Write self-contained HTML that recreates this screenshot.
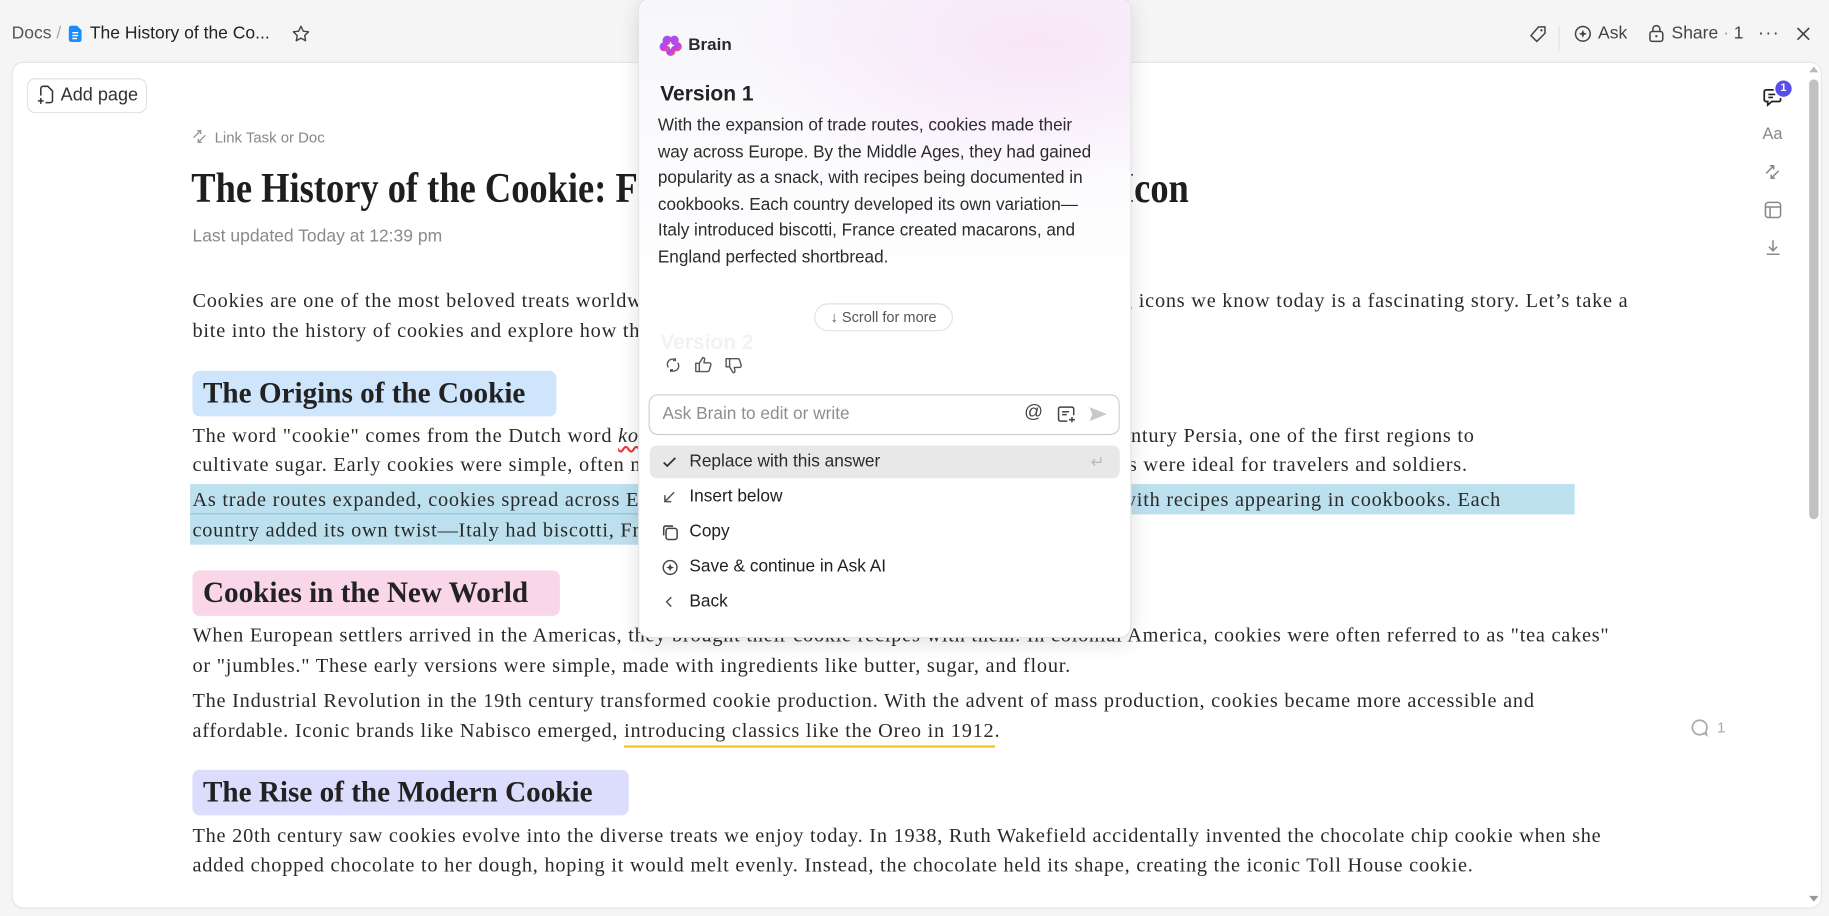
<!DOCTYPE html>
<html><head><meta charset="utf-8"><style>
html,body{margin:0;padding:0;width:1829px;height:916px;overflow:hidden;background:#f5f5f5}
#w{position:absolute;left:0;top:0;width:1568px;height:785px;transform:scale(1.16645);transform-origin:0 0;font-family:"Liberation Sans",sans-serif;color:#202020}
.a{position:absolute;white-space:nowrap}
.card{position:absolute;left:10px;top:53px;width:1550px;height:724px;background:#fff;border:1px solid #e6e6e6;border-radius:10px}
.s{font-family:"Liberation Serif",serif;font-size:17.4px;line-height:26px;color:#2a2a2a;letter-spacing:0.66px}
.h2{position:absolute;left:165px;height:39px;border-radius:6px;font-family:"Liberation Serif",serif;font-weight:bold;font-size:25px;line-height:39px;padding:0 9px;color:#222;box-sizing:border-box;white-space:nowrap;overflow:hidden}
.ic{position:absolute}
.pop{position:absolute;left:547px;top:-2px;width:421px;height:547px;background:#fff;border:1px solid #e3e3e3;border-radius:10px;box-shadow:0 4px 18px rgba(0,0,0,.12);overflow:hidden}
.p{font-size:14.7px;line-height:22.5px;color:#2b2b2b}
.mi{position:absolute;left:9px;width:403px;height:28px;border-radius:6px;font-size:14.8px;line-height:28px}
.mi span{position:absolute;left:34px}
.mi svg{position:absolute;left:10px;top:7px}
</style></head><body><div id="w">
<div class="a" style="left:10px;top:19px;font-size:15px;line-height:20px;color:#555">Docs <span style="color:#aaa">/</span></div>
<svg class="ic" style="left:58px;top:22px" width="12" height="14" viewBox="0 0 12 14"><path d="M1 2a2 2 0 0 1 2-2h5l4 4v8a2 2 0 0 1-2 2H3a2 2 0 0 1-2-2z" fill="#1a8cff"/><path d="M4 6h5M4 8.5h5M4 11h4" stroke="#fff" stroke-width="1.2"/></svg>
<div class="a" style="left:77px;top:19px;font-size:15px;line-height:20px;color:#222">The History of the Co...</div>
<svg class="ic" style="left:250px;top:21px" width="16" height="16" viewBox="0 0 16 16"><path d="M8 1.5l2 4.2 4.5.6-3.3 3.1.8 4.5L8 11.7l-4 2.2.8-4.5L1.5 6.3 6 5.7z" fill="none" stroke="#444" stroke-width="1.2" stroke-linejoin="round"/></svg>
<svg class="ic" style="left:1310px;top:21px" width="17" height="17" viewBox="0 0 17 17"><path d="M9 2h5.5v5.5L7.5 14.5 2.5 9.5z" fill="none" stroke="#444" stroke-width="1.3" stroke-linejoin="round"/><circle cx="11.5" cy="5" r="1" fill="#444"/></svg>
<div class="a" style="left:1336px;top:22px;width:1px;height:22px;background:#e0e0e0"></div>
<svg class="ic" style="left:1349px;top:21px" width="16" height="16" viewBox="0 0 16 16"><circle cx="8" cy="8" r="6.3" fill="none" stroke="#444" stroke-width="1.3"/><path d="M8 4.5l1 2.5 2.5 1-2.5 1-1 2.5-1-2.5-2.5-1 2.5-1z" fill="#444"/></svg>
<div class="a" style="left:1370px;top:19px;font-size:15px;line-height:20px;color:#444">Ask</div>
<svg class="ic" style="left:1413px;top:20px" width="14" height="17" viewBox="0 0 14 17"><rect x="1.5" y="7" width="11" height="8.5" rx="2" fill="none" stroke="#444" stroke-width="1.3"/><path d="M4 7V5a3 3 0 0 1 6 0v2" fill="none" stroke="#444" stroke-width="1.3"/><circle cx="7" cy="11" r="1" fill="#444"/></svg>
<div class="a" style="left:1433px;top:19px;font-size:15px;line-height:20px;color:#444">Share <span style="color:#999">·</span> 1</div>
<div class="a" style="left:1507px;top:19px;font-size:16px;line-height:20px;color:#444;letter-spacing:1px">···</div>
<svg class="ic" style="left:1540px;top:23px" width="12" height="12" viewBox="0 0 12 12"><path d="M1 1l10 10M11 1L1 11" stroke="#444" stroke-width="1.4"/></svg>

<div class="card"></div>
<div class="a" style="left:23px;top:67px;width:103px;height:30px;border:1px solid #e3e3e3;border-radius:7px;box-sizing:border-box"></div>
<svg class="ic" style="left:31px;top:73px" width="16" height="17" viewBox="0 0 16 17"><path d="M4 9V3a2 2 0 0 1 2-2h4l4 4v8a2 2 0 0 1-2 2H8" fill="none" stroke="#333" stroke-width="1.3"/><path d="M4 11v5M1.5 13.5h5" stroke="#333" stroke-width="1.3"/></svg>
<div class="a" style="left:52px;top:72px;font-size:15.5px;line-height:20px;color:#333">Add page</div>
<svg class="ic" style="left:164px;top:110px" width="14" height="14" viewBox="0 0 14 14"><path d="M2 8l6-6M5 2h3v3M12 6l-6 6M9 12H6V9" fill="none" stroke="#999" stroke-width="1.2"/></svg>
<div class="a" style="left:184px;top:109px;font-size:12.8px;line-height:18px;color:#888">Link Task or Doc</div>
<div class="a" style="left:164px;top:139px;font-family:'Liberation Serif',serif;font-weight:bold;font-size:36px;line-height:44px;color:#1e1e1e;transform:scaleX(0.868);transform-origin:0 0">The History of the Cookie: From Ancient Treats to Modern Icon</div>
<div class="a" style="left:165px;top:193px;font-size:15px;line-height:20px;color:#8a8a8a">Last updated Today at 12:39 pm</div>

<div class="a s" style="left:165px;top:244px">Cookies are one of the most beloved treats worldwide, and their journey from early kitchens to the baking icons we know today is a fascinating story. Let’s take a</div>
<div class="a s" style="left:165px;top:270px">bite into the history of cookies and explore how they became a treat for everyone.</div>

<div class="h2" style="top:318px;width:312px;background:#cfe5fb">The Origins of the Cookie</div>
<div class="a s" style="left:165px;top:360px">The word "cookie" comes from the Dutch word <i style="text-decoration:underline wavy #e33;text-underline-offset:3px">koekje</i>, meaning "little cake." Cookies date back to 7th-century Persia, one of the first regions to</div>
<div class="a s" style="left:165px;top:385px">cultivate sugar. Early cookies were simple, often made from flour, honey, and spices. These portable treats were ideal for travelers and soldiers.</div>
<div class="a" style="left:163px;top:415px;width:1187px;height:26px;background:#bde0ef"></div>
<div class="a" style="left:163px;top:441px;width:430px;height:26px;background:#bde0ef"></div>
<div class="a" style="left:163px;top:440px;width:430px;height:1px;background:#8cc6df"></div>
<div class="a s" style="left:165px;top:415px">As trade routes expanded, cookies spread across Europe. By the Middle Ages, they had become a snack, with recipes appearing in cookbooks. Each</div>
<div class="a s" style="left:165px;top:441px">country added its own twist—Italy had biscotti, France had macarons.</div>

<div class="h2" style="top:489px;width:315px;background:#f9d7e8">Cookies in the New World</div>
<div class="a s" style="left:165px;top:531px">When European settlers arrived in the Americas, they brought their cookie recipes with them. In colonial America, cookies were often referred to as "tea cakes"</div>
<div class="a s" style="left:165px;top:557px">or "jumbles." These early versions were simple, made with ingredients like butter, sugar, and flour.</div>
<div class="a s" style="left:165px;top:587px">The Industrial Revolution in the 19th century transformed cookie production. With the advent of mass production, cookies became more accessible and</div>
<div class="a s" style="left:165px;top:613px">affordable. Iconic brands like Nabisco emerged, <span style="border-bottom:2px solid #f5c518;padding-bottom:3px">introducing classics like the Oreo in 1912</span>.</div>
<svg class="ic" style="left:1449px;top:616px" width="16" height="16" viewBox="0 0 16 16"><path d="M8 1.5a6.2 6.2 0 1 0 4 11l2 1.5-.6-3A6.2 6.2 0 0 0 8 1.5z" fill="none" stroke="#aaa" stroke-width="1.5"/></svg>
<div class="a" style="left:1472px;top:616px;font-size:13px;color:#aaa">1</div>

<div class="h2" style="top:660px;width:374px;background:#dcdcfd">The Rise of the Modern Cookie</div>
<div class="a s" style="left:165px;top:703px">The 20th century saw cookies evolve into the diverse treats we enjoy today. In 1938, Ruth Wakefield accidentally invented the chocolate chip cookie when she</div>
<div class="a s" style="left:165px;top:728px">added chopped chocolate to her dough, hoping it would melt evenly. Instead, the chocolate held its shape, creating the iconic Toll House cookie.</div>

<svg class="ic" style="left:1511px;top:75px" width="17" height="17" viewBox="0 0 17 17"><path d="M3 2h11a1.5 1.5 0 0 1 1.5 1.5v7A1.5 1.5 0 0 1 14 12H8l-3.5 3v-3H3a1.5 1.5 0 0 1-1.5-1.5v-7A1.5 1.5 0 0 1 3 2z" fill="none" stroke="#222" stroke-width="1.5"/><path d="M5 6h6M5 8.5h4" stroke="#222" stroke-width="1.4"/></svg>
<div class="a" style="left:1522px;top:69px;width:14px;height:14px;border-radius:7px;background:#5a4ee8;color:#fff;font-size:9.5px;line-height:14px;text-align:center;font-weight:bold;box-shadow:0 0 0 1.5px #fff">1</div>
<div class="a" style="left:1511px;top:106px;font-size:14px;color:#888">Aa</div>
<svg class="ic" style="left:1512px;top:140px" width="15" height="15" viewBox="0 0 14 14"><path d="M2 8l6-6M5 2h3v3M12 6l-6 6M9 12H6V9" fill="none" stroke="#888" stroke-width="1.2"/></svg>
<svg class="ic" style="left:1512px;top:172px" width="16" height="16" viewBox="0 0 16 16"><rect x="1.5" y="1.5" width="13" height="13" rx="2.5" fill="none" stroke="#888" stroke-width="1.3"/><path d="M1.5 5.5h13M5.5 5.5v9" stroke="#888" stroke-width="1.3"/></svg>
<svg class="ic" style="left:1512px;top:204px" width="16" height="16" viewBox="0 0 16 16"><path d="M8 2v9M4.5 7.5L8 11l3.5-3.5M2.5 14h11" fill="none" stroke="#888" stroke-width="1.3"/></svg>
<div class="a" style="left:1551px;top:68px;width:8px;height:377px;border-radius:4px;background:#c1c1c1"></div>
<div class="a" style="left:1551px;top:57px;width:0;height:0;border-left:4px solid transparent;border-right:4px solid transparent;border-bottom:5px solid #bbb"></div>
<div class="a" style="left:1551px;top:768px;width:0;height:0;border-left:4px solid transparent;border-right:4px solid transparent;border-top:5px solid #999"></div>

<div class="pop">
<div class="a" style="left:0;top:0;width:421px;height:260px;background:radial-gradient(ellipse 260px 120px at 340px 40px,rgba(248,226,248,.85),rgba(255,255,255,0)),linear-gradient(180deg,#f7f6fb 0%,#fff 100%)"></div>
<svg class="ic" style="left:17px;top:30px" width="20" height="20" viewBox="0 0 20 20"><defs><linearGradient id="g" x1="0" y1="0" x2="1" y2="1"><stop offset="0" stop-color="#6a7cff"/><stop offset=".5" stop-color="#c03cf0"/><stop offset="1" stop-color="#ff6a2a"/></linearGradient></defs><circle cx="7" cy="5.5" r="4" fill="url(#g)"/><circle cx="13" cy="5.5" r="4" fill="url(#g)"/><circle cx="15.5" cy="11" r="4" fill="url(#g)"/><circle cx="10" cy="15" r="4" fill="url(#g)"/><circle cx="4.5" cy="11" r="4" fill="url(#g)"/><path d="M10 6.5l1 2.5 2.5 1-2.5 1-1 2.5-1-2.5-2.5-1 2.5-1z" fill="#fff"/></svg>
<div class="a" style="left:42px;top:30px;font-size:14.6px;font-weight:bold;color:#2a2a2a;line-height:20px">Brain</div>
<div class="a" style="left:18px;top:69px;font-size:18px;font-weight:bold;color:#222;line-height:24px">Version 1</div>
<div class="a p" style="left:16px;top:98px">With the expansion of trade routes, cookies made their<br>way across Europe. By the Middle Ages, they had gained<br>popularity as a snack, with recipes being documented in<br>cookbooks. Each country developed its own variation—<br>Italy introduced biscotti, France created macarons, and<br>England perfected shortbread.</div>
<div class="a" style="left:18px;top:282px;font-size:18px;font-weight:bold;color:#f2f2f2;line-height:24px">Version 2</div>
<div class="a" style="left:150px;top:261px;width:119px;height:24px;border:1px solid #e2e2e2;border-radius:12px;background:#fff;box-sizing:border-box;font-size:12.5px;line-height:22px;color:#555;text-align:center">↓ Scroll for more</div>
<svg class="ic" style="left:22px;top:307px" width="14" height="14" viewBox="0 0 14 14"><path d="M3 9a4.5 4.5 0 0 1 6-6.5M11 5a4.5 4.5 0 0 1-6 6.5M9 1v2h-2M5 13v-2h2" fill="none" stroke="#555" stroke-width="1.2"/></svg>
<svg class="ic" style="left:47px;top:306px" width="16" height="15" viewBox="0 0 16 15"><path d="M1.5 6.5h3v7h-3zM4.5 6.5L7.5 1.5c1.2 0 1.8.8 1.5 2L8.5 6h4.5a1.5 1.5 0 0 1 1.4 1.9l-1.4 4.5a1.5 1.5 0 0 1-1.4 1.1H4.5" fill="none" stroke="#555" stroke-width="1.2" stroke-linejoin="round"/></svg>
<svg class="ic" style="left:73px;top:307px" width="16" height="15" viewBox="0 0 16 15"><g transform="matrix(1 0 0 -1 0 15)"><path d="M1.5 6.5h3v7h-3zM4.5 6.5L7.5 1.5c1.2 0 1.8.8 1.5 2L8.5 6h4.5a1.5 1.5 0 0 1 1.4 1.9l-1.4 4.5a1.5 1.5 0 0 1-1.4 1.1H4.5" fill="none" stroke="#555" stroke-width="1.2" stroke-linejoin="round"/></g></svg>
<div class="a" style="left:8px;top:339px;width:404px;height:35px;border:1px solid #cfcfcf;border-radius:8px;box-sizing:border-box"></div>
<div class="a" style="left:20px;top:346px;font-size:14.8px;line-height:20px;color:#8e8e8e">Ask Brain to edit or write</div>
<div class="a" style="left:330px;top:343px;font-size:16px;color:#444;line-height:24px">@</div>
<svg class="ic" style="left:358px;top:348px" width="16" height="16" viewBox="0 0 16 16"><path d="M9 14H3a1.5 1.5 0 0 1-1.5-1.5v-9A1.5 1.5 0 0 1 3 2h10a1.5 1.5 0 0 1 1.5 1.5V9" fill="none" stroke="#444" stroke-width="1.3"/><path d="M4.5 6h6M4.5 8.5h4M13 10.5v4.5M10.5 12.8h5" stroke="#444" stroke-width="1.3"/></svg>
<svg class="ic" style="left:385px;top:349px" width="17" height="14" viewBox="0 0 17 14"><path d="M1 1l15 6-15 6 2.5-6z" fill="#c8c8c8"/></svg>
<div class="mi" style="top:383px;background:#e8e8e8"><svg width="14" height="14" viewBox="0 0 14 14"><path d="M2 7.5l3 3 7-7" fill="none" stroke="#333" stroke-width="1.5"/></svg><span style="color:#2b2b2b">Replace with this answer</span><div class="a" style="left:378px;top:0;color:#bbb;font-size:14px">↵</div></div>
<div class="mi" style="top:413px"><svg width="14" height="14" viewBox="0 0 14 14"><path d="M11 3L3 11M3 5.5V11h5.5" fill="none" stroke="#555" stroke-width="1.3"/></svg><span>Insert below</span></div>
<div class="mi" style="top:443px"><svg width="15" height="15" viewBox="0 0 15 15"><rect x="4" y="4" width="9.5" height="9.5" rx="2" fill="none" stroke="#444" stroke-width="1.3"/><path d="M2 10V3.5A1.5 1.5 0 0 1 3.5 2H10" fill="none" stroke="#444" stroke-width="1.3"/></svg><span>Copy</span></div>
<div class="mi" style="top:473px"><svg width="15" height="15" viewBox="0 0 16 16"><circle cx="8" cy="8" r="6.3" fill="none" stroke="#444" stroke-width="1.3"/><path d="M8 4.5l1 2.5 2.5 1-2.5 1-1 2.5-1-2.5-2.5-1 2.5-1z" fill="#444"/></svg><span>Save &amp; continue in Ask AI</span></div>
<div class="mi" style="top:503px"><svg width="14" height="14" viewBox="0 0 14 14"><path d="M8.5 3L4.5 7l4 4" fill="none" stroke="#555" stroke-width="1.3"/></svg><span>Back</span></div>
</div>
</div></body></html>
